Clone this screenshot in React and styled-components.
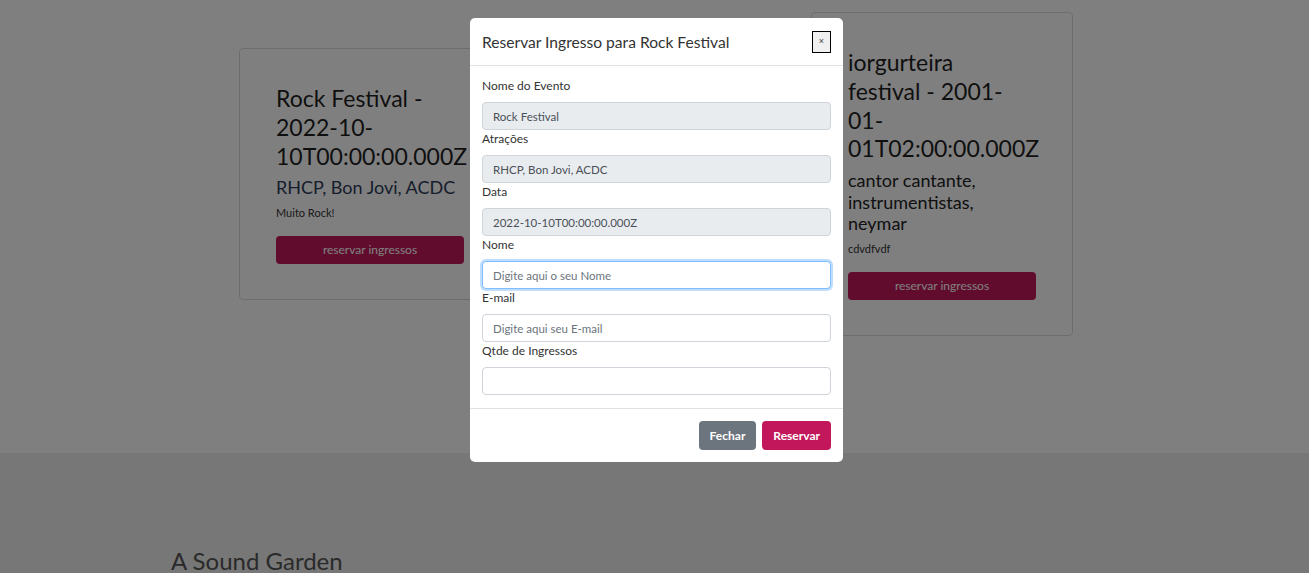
import React from "react";
import styled, { createGlobalStyle, css } from "styled-components";

const GlobalStyle = createGlobalStyle`
  html, body { margin: 0; padding: 0; }
  body {
    font-family: Lato, "Noto Sans", sans-serif;
    color: #212529;
    background: #fff;
    overflow: hidden;
  }
  * { box-sizing: border-box; }
`;

const Page = styled.div`
  position: relative;
  width: 1309px;
  height: 573px;
  overflow: hidden;
`;

const EventsSection = styled.section`
  background: #fff;
  height: 453px;
  padding-top: 12px;
`;

const CardsRow = styled.div`
  display: flex;
  justify-content: center;
  align-items: center;
  gap: 24px;
  padding-left: 3px;
`;

const Card = styled.div`
  width: 262px;
  border: 1px solid rgba(0, 0, 0, 0.14);
  border-radius: 4px;
  padding: 35px 36px;
`;

const CardTitle = styled.h3`
  margin: 0 0 7px;
  max-width: 172px;
  font-size: 23px;
  line-height: 28.8px;
  font-weight: 400;
  color: #1f1f1f;
  white-space: normal;
`;

const CardSubtitle = styled.h5`
  margin: 0 0 6px;
  font-size: 18px;
  line-height: 21.6px;
  font-weight: 400;
  color: ${(p) => (p.$accent ? "#2e3b58" : "#222")};
`;

const CardText = styled.p`
  margin: 0 0 15px;
  font-size: 11px;
  line-height: 16px;
  color: #333;
`;

const CardButton = styled.button`
  display: block;
  width: 188px;
  height: 28px;
  border: none;
  border-radius: 4px;
  background: #c2185b;
  color: #fff;
  font-family: inherit;
  font-size: 12px;
`;

const AboutSection = styled.section`
  background: #eee;
  height: 120px;
  padding: 93px 0 0 171px;
`;

const AboutTitle = styled.h2`
  margin: 0;
  font-size: 24px;
  line-height: 29px;
  font-weight: 400;
  color: #555;
`;

const Backdrop = styled.div`
  position: absolute;
  inset: 0;
  background: rgba(0, 0, 0, 0.5);
`;

const Modal = styled.div`
  position: absolute;
  left: 470px;
  top: 18px;
  width: 373px;
  background: #fff;
  border-radius: 5px;
  display: flex;
  flex-direction: column;
`;

const ModalHeader = styled.div`
  display: flex;
  align-items: center;
  justify-content: space-between;
  height: 48px;
  padding: 0 12px;
  border-bottom: 1px solid #dee2e6;
`;

const ModalTitle = styled.h5`
  margin: 0;
  font-size: 15.6px;
  font-weight: 400;
  color: #333;
`;

const CloseButton = styled.button`
  width: 19px;
  height: 22px;
  padding: 0;
  border: 1px solid #000;
  background: #f0f0f0;
  font-size: 9px;
  color: #444;
  font-family: Arial, sans-serif;
  line-height: 1;
`;

const ModalBody = styled.div`
  padding: 11px 12px 13px;
  display: flex;
  flex-direction: column;
`;

const Label = styled.label`
  display: block;
  font-size: 12px;
  line-height: 17px;
  color: #333;
  margin-bottom: 8px;
`;

const Input = styled.input`
  display: block;
  width: 100%;
  height: 28px;
  padding: 0 10px;
  border: 1px solid #ced4da;
  border-radius: 4px;
  font-family: inherit;
  font-size: 11.5px;
  color: #495057;
  background: #fff;
  outline: none;
  &::placeholder { color: #6c757d; }
  &:disabled { background: #e9ecef; color: #495057; }
  ${(p) =>
    p.$focused &&
    css`
      border-color: #80bdff;
      box-shadow: 0 0 0 2px rgba(0, 123, 255, 0.25);
    `}
`;

const ModalFooter = styled.div`
  display: flex;
  justify-content: flex-end;
  gap: 6px;
  padding: 12px;
  border-top: 1px solid #dee2e6;
`;

const FooterButton = styled.button`
  height: 29px;
  padding: 0 11px;
  border: none;
  border-radius: 4px;
  font-family: inherit;
  font-size: 12px;
  font-weight: 700;
  color: #fff;
  background: ${(p) => (p.$variant === "primary" ? "#c2185b" : "#6c757d")};
`;

const events = [
  {
    title: "Rock Festival - 2022-10-10T00:00:00.000Z",
    attractions: "RHCP, Bon Jovi, ACDC",
    description: "Muito Rock!",
    accent: true,
  },
  {
    title: "Samba Festival - 2022-11-10T00:00:00.000Z",
    attractions: "Zeca, Arlindo, Beth",
    description: "Muito Samba!",
    accent: true,
  },
  {
    title: "iorgurteira festival - 2001-01-01T02:00:00.000Z",
    attractions: "cantor cantante, instrumentistas, neymar",
    description: "cdvdfvdf",
  },
];

const fields = [
  { label: "Nome do Evento", value: "Rock Festival", disabled: true },
  { label: "Atrações", value: "RHCP, Bon Jovi, ACDC", disabled: true },
  { label: "Data", value: "2022-10-10T00:00:00.000Z", disabled: true },
  { label: "Nome", placeholder: "Digite aqui o seu Nome", focused: true },
  { label: "E-mail", placeholder: "Digite aqui seu E-mail" },
  { label: "Qtde de Ingressos", placeholder: "" },
];

export default function App() {
  return (
    <Page>
      <GlobalStyle />
      <EventsSection>
        <CardsRow>
          {events.map((e, i) => (
            <Card key={i}>
              <CardTitle>{e.title}</CardTitle>
              <CardSubtitle $accent={e.accent}>{e.attractions}</CardSubtitle>
              <CardText>{e.description}</CardText>
              <CardButton>reservar ingressos</CardButton>
            </Card>
          ))}
        </CardsRow>
      </EventsSection>
      <AboutSection>
        <AboutTitle>A Sound Garden</AboutTitle>
      </AboutSection>
      <Backdrop />
      <Modal>
        <ModalHeader>
          <ModalTitle>Reservar Ingresso para Rock Festival</ModalTitle>
          <CloseButton>×</CloseButton>
        </ModalHeader>
        <ModalBody>
          {fields.map((f, i) => (
            <div key={i}>
              <Label>{f.label}</Label>
              <Input
                disabled={f.disabled}
                defaultValue={f.value}
                placeholder={f.placeholder}
                $focused={f.focused}
              />
            </div>
          ))}
        </ModalBody>
        <ModalFooter>
          <FooterButton>Fechar</FooterButton>
          <FooterButton $variant="primary">Reservar</FooterButton>
        </ModalFooter>
      </Modal>
    </Page>
  );
}
